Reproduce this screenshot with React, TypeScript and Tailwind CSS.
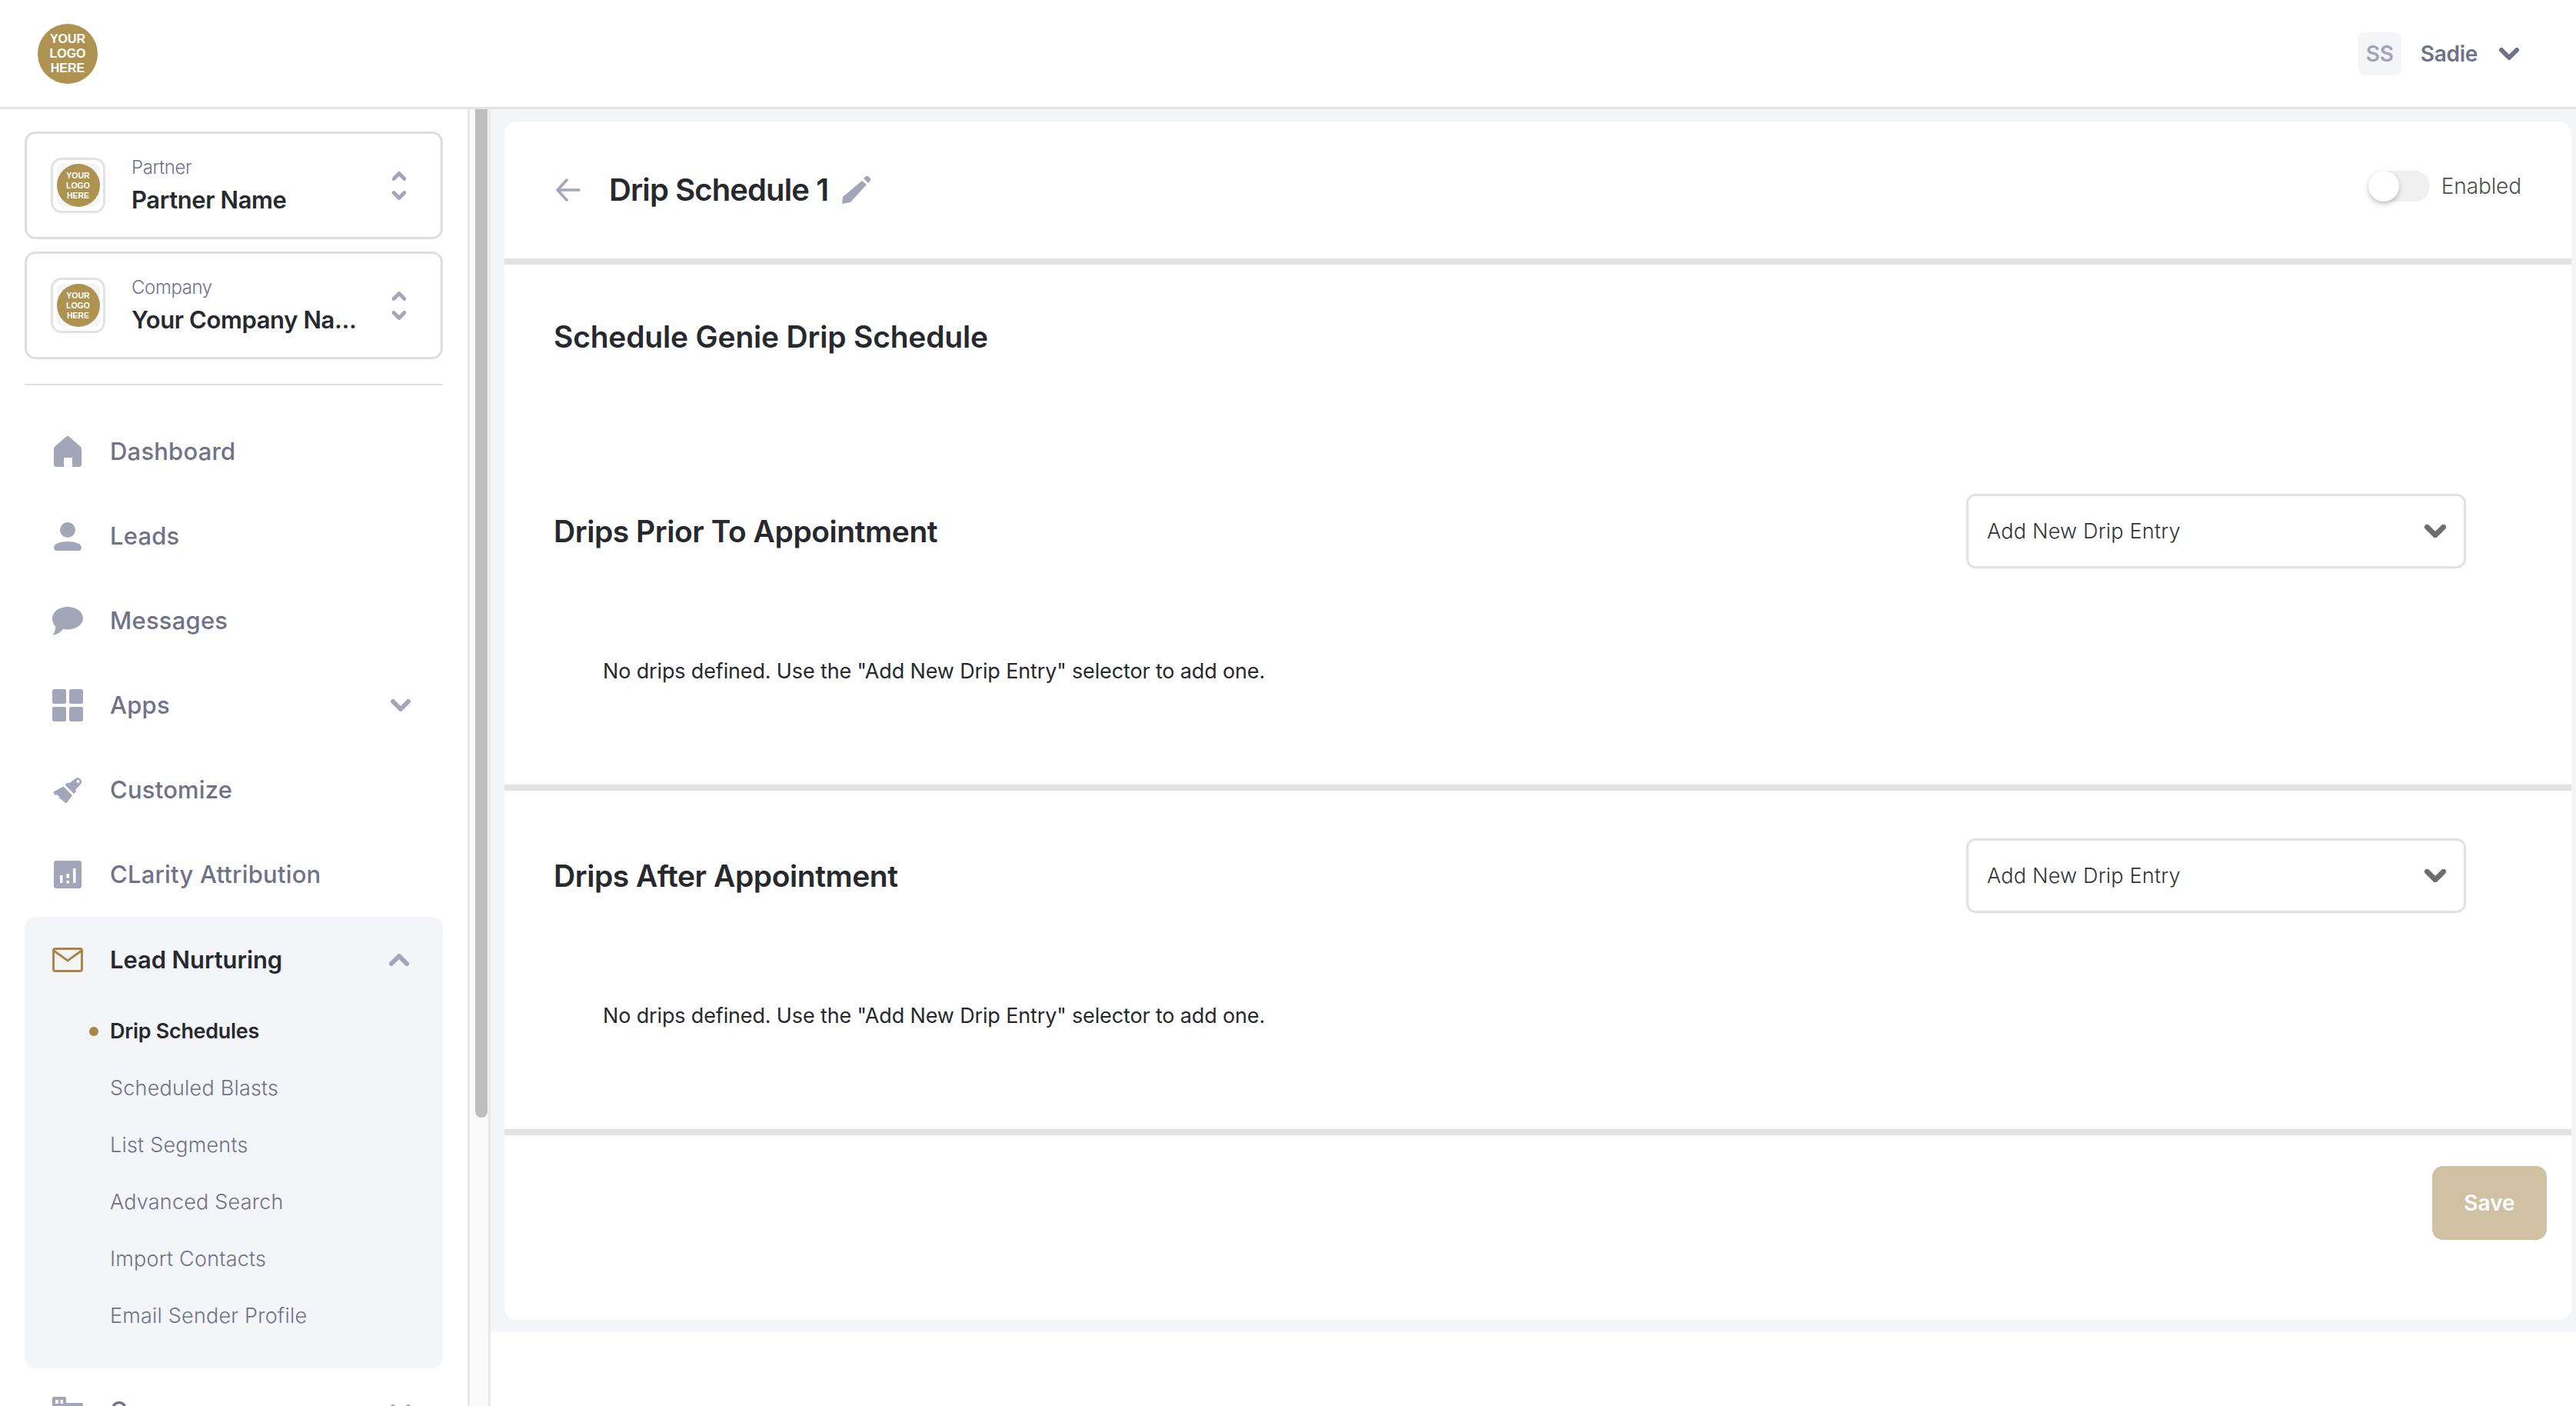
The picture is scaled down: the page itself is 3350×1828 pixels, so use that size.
import React from 'react';

const Chevron = ({ up, className, weight = 6 }: { up?: boolean; className: string; weight?: number }) => (
  <svg viewBox="0 0 26 16" className={className} fill="none" stroke="currentColor" strokeWidth={weight} strokeLinecap="round" strokeLinejoin="round">
    <path d={up ? 'M3 13 13 3l10 10' : 'M3 3l10 10L23 3'} />
  </svg>
);

const LogoBadge = ({ small }: { small?: boolean }) => (
  <div
    className={`flex flex-col items-center justify-center rounded-full bg-[#ae9250] font-bold text-white font-['Liberation_Sans',sans-serif] ${
      small ? 'h-[56px] w-[56px] text-[10.5px] leading-[13px]' : 'h-[78px] w-[78px] text-[16px] leading-[19px]'
    }`}
  >
    <span>YOUR</span>
    <span>LOGO</span>
    <span>HERE</span>
  </div>
);

const Switcher = ({ label, name }: { label: string; name: string }) => (
  <div className="flex h-[140px] items-center rounded-[14px] border-[3px] border-[#dedede] pl-[31px] pr-[45px]">
    <div className="flex h-[72px] w-[71px] shrink-0 items-center justify-center rounded-[14px] border-[3px] border-[#e2e2e2]">
      <div className="rounded-[8px] bg-[#f4f5f9]">
        <LogoBadge small />
      </div>
    </div>
    <div className="ml-[34px] flex-1 min-w-0">
      <div className="text-[24px] leading-[28px] font-light tracking-[-0.4px] text-[#6f7288]">{label}</div>
      <div className="mt-[9px] text-[31px] leading-[38px] font-semibold tracking-[-0.4px] text-[#26292d]">{name}</div>
    </div>
    <div className="flex flex-col gap-[13px] text-[#a3a6b8]">
      <Chevron up weight={7} className="h-[12px] w-[18px]" />
      <Chevron weight={7} className="h-[12px] w-[18px]" />
    </div>
  </div>
);

const HomeIcon = () => (
  <svg viewBox="0 0 36 40" className="h-[40px] w-[36px]" fill="currentColor">
    <path fillRule="evenodd" d="M15.800 1a3.400 3.400 0 0 1 4.400 0l14.400 12.600c.9.8 1.400 1.900 1.400 3.100V37a3 3 0 0 1-3 3h-9V28H13v12H3a3 3 0 0 1-3-3V16.700c0-1.200.5-2.300 1.400-3.100z" />
  </svg>
);

const UserIcon = () => (
  <svg viewBox="0 0 36 37" className="h-[37px] w-[36px]" fill="currentColor">
    <circle cx="18" cy="10" r="10" />
    <path d="M0 33c0-5 8-8 18-8s18 3 18 8c0 2.500-1.500 4-4 4H4c-2.500 0-4-1.500-4-4z" />
  </svg>
);

const ChatIcon = () => (
  <svg viewBox="0 0 40 37" className="h-[37px] w-[40px]" fill="currentColor">
    <path d="M20 0c11 0 20 6.500 20 14.800S31 29.500 20 29.500c-2 0-4-.2-5.800-.7C11.500 32.500 6 36.500 0 37c2.500-2.500 4-6 4.200-11.500C1.500 22.800 0 19 0 14.800 0 6.500 9 0 20 0z" />
  </svg>
);

const GridIcon = () => (
  <svg viewBox="0 0 40 42" className="h-[42px] w-[40px]" fill="currentColor">
    <rect width="18" height="19" rx="2.500" />
    <rect x="22" width="18" height="19" rx="2.500" />
    <rect y="23" width="18" height="19" rx="2.500" />
    <rect x="22" y="23" width="18" height="19" rx="2.500" />
  </svg>
);

const BrushIcon = () => (
  <svg viewBox="0 0 38 35" className="h-[35px] w-[38px]" fill="currentColor">
    <path fillRule="evenodd" d="M29 2.500a5 5 0 0 1 7 7L29 17l1 2-3 3L15.500 10.500l3-3 2 1zM32.500 4a2 2 0 1 0 .1 4 2 2 0 0 0-.1-4z" />
    <path d="M13.500 12.500 25 24l-6.500 9a2.500 2.500 0 0 1-3.500.3L10 28.500l-2 .5.5-2.500L5 23l-2 1-2-2.500a1.500 1.500 0 0 1 .5-2.500z" />
  </svg>
);

const ChartIcon = () => (
  <svg viewBox="0 0 36 36" className="h-[36px] w-[36px]" fill="currentColor">
    <path fillRule="evenodd" d="M3 0h30a3 3 0 0 1 3 3v30a3 3 0 0 1-3 3H3a3 3 0 0 1-3-3V3a3 3 0 0 1 3-3zm5 19v10h3.500V19zm8.500 7v3.500H20V26zm0-9v5.500H20V17zM25 10v19h3.500V10z" />
  </svg>
);

const MailIcon = () => (
  <svg viewBox="0 0 40 32" className="h-[32px] w-[40px]" fill="none" stroke="#a8864a" strokeWidth="3">
    <rect x="1.500" y="1.500" width="37" height="29" rx="2.500" />
    <path d="M2 4l18 13L38 4" />
  </svg>
);

const BuildingIcon = () => (
  <svg viewBox="0 0 40 36" className="h-[36px] w-[40px]" fill="currentColor">
    <path fillRule="evenodd" d="M2 0h14a2 2 0 0 1 2 2v6h20a2 2 0 0 1 2 2v26H0V2a2 2 0 0 1 2-2zm2 4v5h4V4zm6.500 0v5H14V4z" />
  </svg>
);

const NavRow = ({ icon, label, chevron }: { icon: React.ReactNode; label: string; chevron?: boolean }) => (
  <div className="flex h-[110px] items-center pl-[36px] pr-[42px]">
    <div className="flex w-[40px] shrink-0 justify-center text-[#a3a6b8]">{icon}</div>
    <div className="ml-[35px] flex-1 text-[31px] font-medium tracking-[0.2px] text-[#6f7288]">{label}</div>
    {chevron && <Chevron className="h-[16px] w-[26px] text-[#a3a6b8]" />}
  </div>
);

const subItems = ['Scheduled Blasts', 'List Segments', 'Advanced Search', 'Import Contacts', 'Email Sender Profile'];

const Sidebar = () => (
  <aside className="w-[608px] shrink-0 overflow-hidden px-[32px] pt-[29px]">
    <div className="flex flex-col gap-[16px]">
      <Switcher label="Partner" name="Partner Name" />
      <Switcher label="Company" name="Your Company Na..." />
    </div>
    <div className="mt-[32px] mb-[31px] h-[2px] bg-[#e2e2e2]" />
    <NavRow icon={<HomeIcon />} label="Dashboard" />
    <NavRow icon={<UserIcon />} label="Leads" />
    <NavRow icon={<ChatIcon />} label="Messages" />
    <NavRow icon={<GridIcon />} label="Apps" chevron />
    <NavRow icon={<BrushIcon />} label="Customize" />
    <NavRow icon={<ChartIcon />} label="CLarity Attribution" />
    <div className="h-[587px] rounded-[14px] bg-[#f4f5f9]">
      <div className="flex h-[112px] items-center pl-[36px] pr-[44px]">
        <div className="flex w-[40px] shrink-0 justify-center">
          <MailIcon />
        </div>
        <div className="ml-[35px] flex-1 text-[31px] font-semibold tracking-[-0.1px] text-[#26292d]">Lead Nurturing</div>
        <Chevron up className="h-[16px] w-[26px] text-[#a3a6b8]" />
      </div>
      <div className="relative flex h-[74px] items-center pl-[111px] text-[27px] font-semibold tracking-[-0.3px] text-[#26292d]">
        <span className="absolute left-[84px] h-[12px] w-[12px] rounded-full bg-[#a8864a]" />
        Drip Schedules
      </div>
      {subItems.map((item) => (
        <div key={item} className="flex h-[74px] items-center pl-[111px] text-[27px] font-light tracking-[0.2px] text-[#6f7288]">
          {item}
        </div>
      ))}
    </div>
    <NavRow icon={<BuildingIcon />} label="Company" chevron />
  </aside>
);

const DripSection = ({ title }: { title: string }) => (
  <div>
    <div className="flex items-center justify-between pl-[64px] pr-[137px] pt-[62px]">
      <h3 className="pt-[2px] text-[39px] font-semibold tracking-[-0.45px] text-[#26292d]">{title}</h3>
      <div className="flex h-[97px] w-[650px] items-center justify-between rounded-[12px] border-[3px] border-[#e2e2e2] pl-[24px] pr-[23px]">
        <span className="pt-[1px] text-[27px] font-light tracking-[0.2px] text-[#333]">Add New Drip Entry</span>
        <Chevron weight={6.500} className="h-[17px] w-[28px] text-[#6e6e6e]" />
      </div>
    </div>
    <p className="mt-[113px] pb-[128px] pl-[128px] pt-[1px] text-[27px] leading-[39px] tracking-[-0.15px] text-[#26292d]">
      No drips defined. Use the "Add New Drip Entry" selector to add one.
    </p>
  </div>
);

export default function App() {
  return (
    <div className="h-[1828px] overflow-hidden bg-white font-['Inter',sans-serif]">
      <header className="flex h-[142px] items-center justify-between border-b-[3px] border-[#e4e4e8] pl-[49px] pr-[74px]">
        <LogoBadge />
        <div className="flex items-center">
          <div className="flex h-[56px] w-[56px] items-center justify-center rounded-[8px] bg-[#f4f5f9] text-[28px] font-semibold text-[#a3a3b5]">SS</div>
          <span className="ml-[25px] text-[28px] font-semibold tracking-[-0.3px] text-[#6f7288]">Sadie</span>
          <Chevron className="ml-[28px] h-[16px] w-[26px] text-[#6f7288]" />
        </div>
      </header>
      <div className="flex h-[1686px]">
        <Sidebar />
        <div className="w-[30px] shrink-0 border-x-[3px] border-[#e8e8e8] bg-[#fafafa] pl-[7px]">
          <div className="h-[1311px] w-[16px] rounded-b-[8px] bg-[#bebebe]" />
        </div>
        <div className="h-[1590px] flex-1 bg-[#f4f5f9] pb-[16px] pl-[18px] pr-[6px] pt-[16px]">
          <main className="h-[1558px] overflow-hidden rounded-[16px] bg-white">
            <div className="flex h-[186px] items-center justify-between border-b-[8px] border-[#e2e2e2] pl-[67px] pr-[65px]">
              <div className="flex items-center">
                <svg viewBox="0 0 32 30" className="h-[30px] w-[32px]" fill="none" stroke="#a3a6b8" strokeWidth="3.500" strokeLinecap="round" strokeLinejoin="round">
                  <path d="M14 2 2 15l12 13M2 15h28" />
                </svg>
                <h1 className="ml-[37px] text-[40px] font-semibold tracking-[-0.9px] text-[#26292d]">Drip Schedule 1</h1>
                <svg viewBox="0 0 37 36" className="ml-[18px] h-[36px] w-[37px]" fill="#a3a6b8">
                  <path d="M26 6l6 5L11 34 0 36l1-9zM28 3l3-3c1-.5 2-.5 3 0l3 3c.5 1 .5 2 0 3l-3 3z" />
                </svg>
              </div>
              <div className="flex items-center pb-[10px]">
                <div className="relative h-[40px] w-[80px] rounded-full bg-[#f0f0f0]">
                  <span className="absolute left-0 top-0 h-[40px] w-[40px] rounded-full bg-white shadow-[0_3px_6px_rgba(0,0,0,0.25)]" />
                </div>
                <span className="ml-[15px] text-[28px] font-light tracking-[-0.1px] text-[#4f4f4f]">Enabled</span>
              </div>
            </div>
            <div className="border-b-[8px] border-[#e2e2e2]">
              <div className="h-[236px] pl-[64px] pt-[66px]">
                <h2 className="text-[39px] leading-[56px] font-semibold tracking-[-0.2px] text-[#26292d]">Schedule Genie Drip Schedule</h2>
              </div>
              <DripSection title="Drips Prior To Appointment" />
            </div>
            <div className="border-b-[8px] border-[#e2e2e2]">
              <DripSection title="Drips After Appointment" />
            </div>
            <div className="flex justify-end pr-[32px] pt-[40px]">
              <button className="h-[96px] w-[149px] rounded-[14px] bg-[#d1c1a3] text-[28px] font-semibold text-white">Save</button>
            </div>
          </main>
        </div>
      </div>
    </div>
  );
}
